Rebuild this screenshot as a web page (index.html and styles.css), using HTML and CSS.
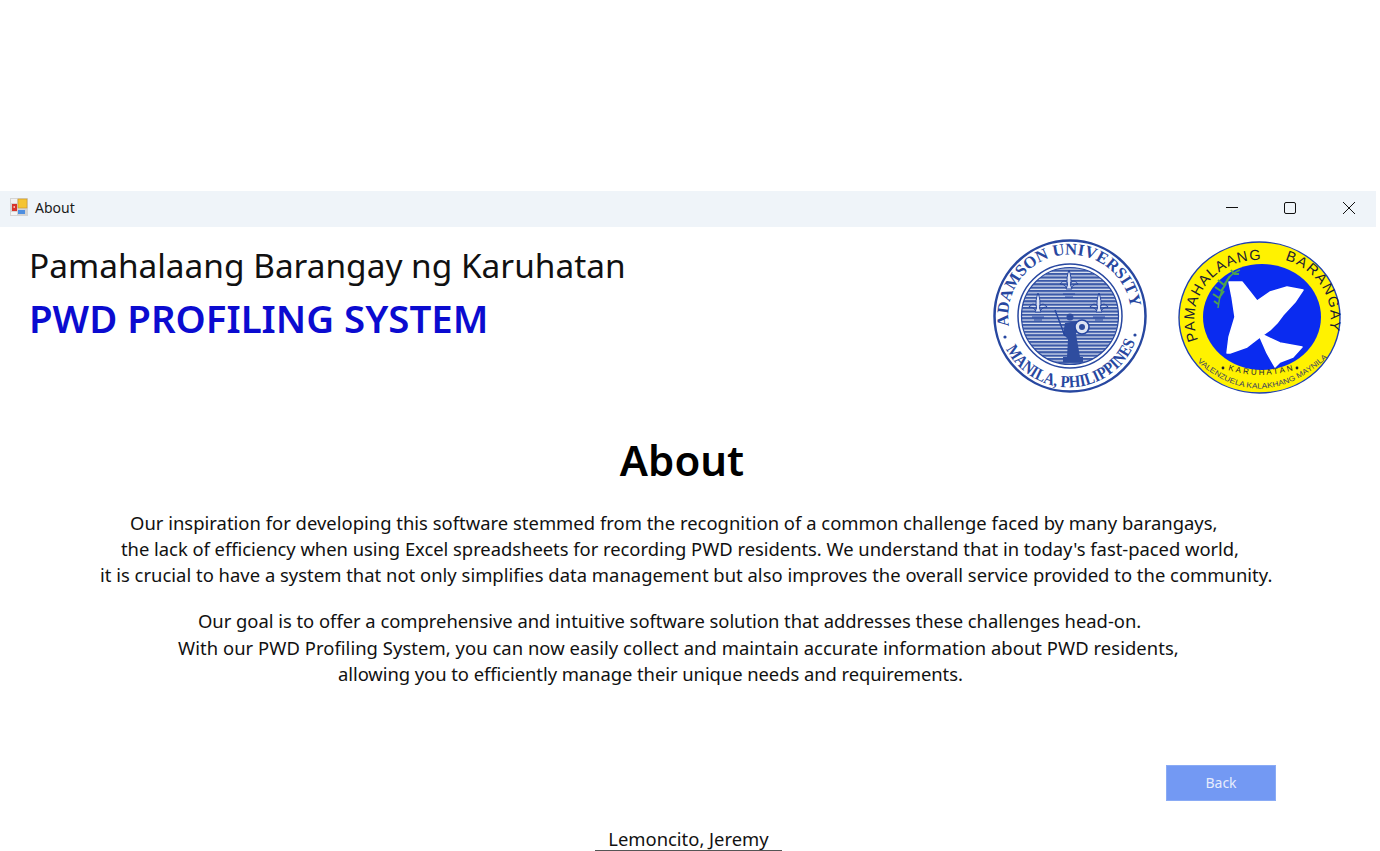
FILE: index.html
```html
<!DOCTYPE html>
<html lang="en">
<head>
    <meta charset="UTF-8">
    <title>About</title>
    <link rel="stylesheet" href="styles.css">
</head>
<body>
    <div class="window">
        <div class="titlebar">
            <svg class="app-icon" width="18" height="18" viewBox="0 0 18 18">
                <rect width="18" height="18" fill="#d4d4d4"/>
                <rect x="1" y="1" width="6" height="4" fill="#f1f1f1"/>
                <rect x="1" y="14" width="6" height="3" fill="#f4f4f4"/>
                <rect x="2" y="6" width="5" height="7" fill="#d8342c"/>
                <rect x="3.5" y="8" width="1.5" height="2" fill="#f2b8a8"/>
                <rect x="8" y="1" width="9" height="9" fill="#f5c431" stroke="#c9952a" stroke-width="0.6"/>
                <rect x="8" y="12" width="7" height="4" fill="#4f8fe0"/>
            </svg>
            <span class="title">About</span>
            <div class="controls">
                <svg class="ctl" width="58" height="36" viewBox="0 0 58 36"><path d="M24 16.5H36" stroke="#111" stroke-width="1" fill="none"/></svg>
                <svg class="ctl" width="58" height="36" viewBox="0 0 58 36"><rect x="24.5" y="11.5" width="11" height="11" rx="1.5" stroke="#111" stroke-width="1" fill="none"/></svg>
                <svg class="ctl" width="58" height="36" viewBox="0 0 58 36"><path d="M25 11L37 23M37 11L25 23" stroke="#111" stroke-width="1" fill="none"/></svg>
            </div>
        </div>

        <div class="head">
            <div class="brand">
                <div class="brand-top">Pamahalaang Barangay ng Karuhatan</div>
                <div class="brand-main">PWD PROFILING SYSTEM</div>
            </div>
            <div class="logos">
                <svg class="seal-a" width="154" height="154" viewBox="0 0 154 154">
                    <defs>
                        <path id="aTop" d="M16 87A61.5 61.5 0 1 1 138 82"/>
                        <path id="aBot" d="M13 110A71 71 0 0 0 141 106"/>
                        <pattern id="stripes" width="4" height="3.4" patternUnits="userSpaceOnUse">
                            <rect width="4" height="3.4" fill="#dfe5f3"/>
                            <rect width="4" height="2.2" fill="#3c5aa8"/>
                        </pattern>
                        <g id="fleur">
                            <path d="M0 0C2 5 2.5 10 1.5 15L3 19H-3L-1.5 15C-2.5 10 -2 5 0 0Z" fill="#dfe5f3" stroke="#2747a0" stroke-width="1"/>
                            <path d="M-1.5 13C-4 10 -7 11 -9 14C-6 14 -4 15 -2 18M1.5 13C4 10 7 11 9 14C6 14 4 15 2 18" fill="none" stroke="#2747a0" stroke-width="1"/>
                            <path d="M-6 24H6M-4 27H4" stroke="#2747a0" stroke-width="1.2"/>
                        </g>
                    </defs>
                    <circle cx="77" cy="77" r="75.5" fill="#fff" stroke="#2747a0" stroke-width="2.5"/>
                    <circle cx="77" cy="77" r="52" fill="#fff" stroke="#2747a0" stroke-width="1.5"/>
                    <circle cx="77" cy="77" r="48.5" fill="url(#stripes)" stroke="#2747a0" stroke-width="1.2"/>
                    <text class="seal-a-text"><textPath href="#aTop" textLength="194" lengthAdjust="spacing">ADAMSON UNIVERSITY</textPath></text>
                    <text class="seal-a-text small"><textPath href="#aBot" textLength="163" lengthAdjust="spacingAndGlyphs">MANILA, PHILIPPINES</textPath></text>
                    <circle cx="12" cy="98" r="1.6" fill="#2747a0"/>
                    <circle cx="142" cy="96" r="1.6" fill="#2747a0"/>
                    <use href="#fleur" x="76" y="31"/>
                    <use href="#fleur" x="45" y="54"/>
                    <use href="#fleur" x="106" y="54"/>
                    <path d="M72 84L84 82L83 95L87 118H90V123H70V118H74L75 100L70 95Z" fill="#2f4d9f"/>
                    <path d="M62 71L72 97" stroke="#2747a0" stroke-width="1.4"/>
                    <circle cx="77" cy="78" r="3.5" fill="#2f4d9f"/>
                    <circle cx="89" cy="88" r="7" fill="#dfe5f3" stroke="#2747a0" stroke-width="1.6"/>
                    <circle cx="89" cy="88" r="3" fill="#2f4d9f"/>
                </svg>
                <svg class="seal-b" width="164" height="156" viewBox="0 0 164 156">
                    <defs>
                        <path id="bLeft" d="M20 100A64 60 0 0 1 84 20"/>
                        <path id="bRight" d="M107 20A64 60 0 0 1 149 97"/>
                        <path id="bMid" d="M50 130Q82 140 116 130"/>
                        <path id="bLow" d="M16 119Q82 179 150 117"/>
                    </defs>
                    <ellipse cx="81.5" cy="77.5" rx="80.5" ry="75.5" fill="#fff200" stroke="#1f3fb0" stroke-width="1.4"/>
                    <ellipse cx="84" cy="77" rx="59" ry="53" fill="#0a2bf0"/>
                    <path d="M51 42L64 42L72 52L79 61L92 52L109 47L125 50L117 62L105 75L99 83L92 90L85 95L102 103L124 107L115 117L102 122L97 127L89 113L82 97L69 107L52 113L49 113L51 97L57 77L54 57Z" fill="#fff" stroke="#fff" stroke-linejoin="round" stroke-width="1.5"/>
                    <path d="M50 40Q42 50 40 68M49 40Q54 33 62 30" stroke="#4da24e" stroke-width="1.5" fill="none"/>
                    <path d="M46 45L40 40M46 45L52 36M43 51L37 47M43 51L48 44M41 58L35 54M41 58L46 51M40 64L36 61M56 34L53 30M56 34L61 34" stroke="#4da24e" stroke-width="2" fill="none"/>
                    <text class="seal-b-text"><textPath href="#bLeft" textLength="120" lengthAdjust="spacing">PAMAHALAANG</textPath></text>
                    <text class="seal-b-text"><textPath href="#bRight" textLength="91" lengthAdjust="spacing">BARANGAY</textPath></text>
                    <circle cx="45" cy="128" r="1.4" fill="#1c2030"/>
                    <circle cx="119" cy="128" r="1.4" fill="#1c2030"/>
                    <text class="seal-b-mid"><textPath href="#bMid" textLength="66" lengthAdjust="spacing">KARUHATAN</textPath></text>
                    <text class="seal-b-low"><textPath href="#bLow" startOffset="4" textLength="146" lengthAdjust="spacingAndGlyphs">VALENZUELA KALAKHANG MAYNILA</textPath></text>
                </svg>
            </div>
        </div>

        <h1 class="page-title">About</h1>

        <div class="para para-one">
            <div class="l1">Our inspiration for developing this software stemmed from the recognition of a common challenge faced by many barangays,</div>
            <div class="l2">the lack of efficiency when using Excel spreadsheets for recording PWD residents. We understand that in today's fast-paced world,</div>
            <div class="l3">it is crucial to have a system that not only simplifies data management but also improves the overall service provided to the community.</div>
        </div>
        <div class="para para-two">
            <div class="l4">Our goal is to offer a comprehensive and intuitive software solution that addresses these challenges head-on.</div>
            <div class="l5">With our PWD Profiling System, you can now easily collect and maintain accurate information about PWD residents,</div>
            <div class="l6">allowing you to efficiently manage their unique needs and requirements.</div>
        </div>

        <div class="actions">
            <button class="back">Back</button>
        </div>

        <div class="credit"><span>Lemoncito, Jeremy</span></div>
    </div>
</body>
</html>
```

FILE: styles.css
```css
*{
    margin: 0;
    padding: 0;
    box-sizing: border-box;
}
html,body{
    background-color: #fff;
    overflow: hidden;
    height: 851px;
}
body{
    font-family: "Noto Sans", "Open Sans", sans-serif;
    color: #111;
}
.window{
    width: 1376px;
    padding-top: 191px;
}
.titlebar{
    height: 36px;
    background-color: #eff4f9;
    display: flex;
    align-items: center;
    padding-left: 10px;
}
.app-icon{
    margin-top: -4px;
}
.title{
    font-size: 14px;
    margin-left: 7px;
    margin-top: -4px;
    color: #1a1a1a;
}
.controls{
    margin-left: auto;
    display: flex;
}
.ctl{
    display: block;
}
.head{
    display: flex;
    justify-content: space-between;
    height: 201px;
    padding: 11px 34px 0 29px;
}
.brand-top{
    font-size: 33.4px;
    line-height: 54px;
}
.brand-main{
    font-size: 38.4px;
    line-height: 52px;
    font-weight: 600;
    color: #0b0bd0;
}
.logos{
    display: flex;
    gap: 31px;
    align-items: flex-start;
    margin-top: 1px;
}
.seal-a, .seal-b{
    display: block;
}
.seal-b{
    margin-top: 1px;
}
.seal-a-text{
    font-family: "Liberation Serif", serif;
    font-weight: 700;
    font-size: 16.5px;
    fill: #2747a0;
}
.seal-a-text.small{
    font-size: 17px;
}
.seal-b-text{
    font-family: "Liberation Sans", sans-serif;
    font-size: 14.5px;
    fill: #1c2030;
}
.seal-b-mid{
    font-family: "Liberation Sans", sans-serif;
    font-size: 8px;
    fill: #1c2030;
}
.seal-b-low{
    font-family: "Liberation Sans", sans-serif;
    font-size: 7.5px;
    fill: #3a4060;
}
.page-title{
    font-size: 42px;
    line-height: 64px;
    font-weight: 600;
    text-align: center;
    margin-left: -12px;
    color: #000;
}
.para{
    font-size: 18.42px;
    line-height: 26px;
    white-space: nowrap;
}
.para-one{
    margin-top: 18px;
}
.para-two{
    margin-top: 20px;
    line-height: 26.5px;
}
.l1{ margin-left: 130px; letter-spacing: 0.017px; }
.l2{ margin-left: 121px; letter-spacing: -0.03px; }
.l3{ margin-left: 100px; letter-spacing: 0.015px; }
.l4{ margin-left: 198px; letter-spacing: -0.027px; }
.l5{ margin-left: 178px; letter-spacing: 0.053px; }
.l6{ margin-left: 338px; letter-spacing: -0.055px; }
.actions{
    display: flex;
    justify-content: flex-end;
    padding-right: 100px;
    margin-top: 77px;
}
.back{
    width: 110px;
    height: 36px;
    background-color: #7399f3;
    border: 1px solid #8aabf5;
    color: #e6ecfc;
    font-family: inherit;
    font-size: 14px;
}
.credit{
    margin-top: 25px;
    margin-left: 595px;
}
.credit span{
    display: inline-block;
    width: 187px;
    text-align: center;
    font-size: 18.4px;
    line-height: 23px;
    padding-top: 1px;
    border-bottom: 1px solid #555;
}
```
